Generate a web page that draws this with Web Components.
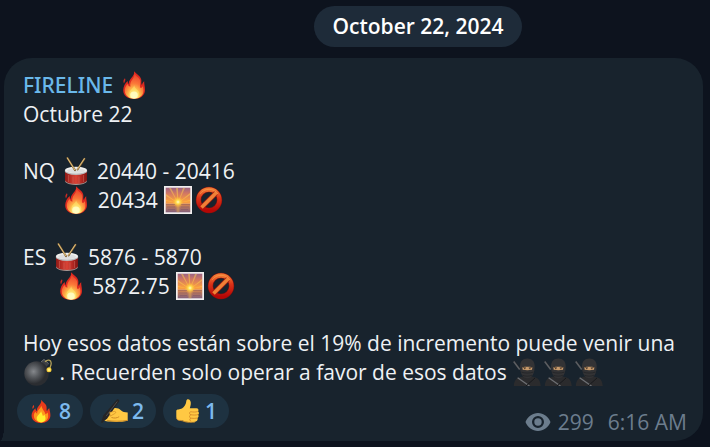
<!DOCTYPE html>
<html lang="es">
<head>
<meta charset="utf-8">
<meta name="viewport" content="width=device-width, initial-scale=1">
<title>FIRELINE</title>
<style>
html,body{margin:0;min-height:100%;background:#0d131e}
body{font-family:"Open Sans","Noto Sans",sans-serif;font-size:21px;line-height:29px;color:#eef1f4}
</style>
</head>
<body>
<chat-view>
  <date-badge>October 22, 2024</date-badge>
  <chat-message>
    <span slot="author">FIRELINE <chat-emoji name="fire"></chat-emoji></span>
    <message-part><message-line>Octubre 22</message-line></message-part>
    <message-part><message-line>NQ <chat-emoji name="drum"></chat-emoji> 20440 - 20416</message-line><message-line>       <chat-emoji name="fire"></chat-emoji> 20434 <chat-emoji name="sunrise"></chat-emoji><chat-emoji name="ban"></chat-emoji></message-line></message-part>
    <message-part><message-line>ES <chat-emoji name="drum"></chat-emoji> 5876 - 5870</message-line><message-line>      <chat-emoji name="fire"></chat-emoji> 5872.75 <chat-emoji name="sunrise"></chat-emoji><chat-emoji name="ban"></chat-emoji></message-line></message-part>
    <message-part><message-line>Hoy esos datos están sobre el 19% de incremento puede venir una <chat-emoji name="bomb"></chat-emoji> . Recuerden solo operar a favor de esos datos <chat-emoji name="ninja"></chat-emoji><chat-emoji name="ninja"></chat-emoji><chat-emoji name="ninja"></chat-emoji></message-line></message-part>
    <reaction-chip slot="reactions" icon="flame">8</reaction-chip>
    <reaction-chip slot="reactions" icon="writing">2</reaction-chip>
    <reaction-chip slot="reactions" icon="thumb">1</reaction-chip>
    <message-meta slot="meta" views="299">6:16 AM</message-meta>
  </chat-message>
</chat-view>
<script>
const ART = {
fire: ['fuego', `<defs><radialGradient id="a" cx=".5" cy=".92" r=".9"><stop offset="0" stop-color="#ffffd0"/><stop offset=".15" stop-color="#fff38a"/><stop offset=".35" stop-color="#fdbf4b"/><stop offset=".6" stop-color="#fb7638"/><stop offset="1" stop-color="#e8402c"/></radialGradient></defs>
<path d="M14 .3c.4 2.200-.3 3.700-1.500 5.300C10.500 8.200 8.800 9.700 8.600 13c-.7-.7-.9-1.800-.7-3-2.900 2.200-4.700 5.700-4.700 9.300C3.200 24.800 8 28 14 28s11-3.300 11-9c0-3.400-1-6-.8-8.700-1.300.9-2 2.200-2.200 3.800-.8-1-.8-2.600-.6-4.300C21.200 5.300 17.500 4 14 .3z" fill="#dd2a20"/>
<path d="M14.300 2.500c.3 2.500-.8 4.200-2 6-1.500 2.200-2.500 4-1.900 7.300-1.500-.5-2.500-1.600-2.900-2.800-2 2.100-2.900 4.600-2.700 7.100C5.100 24.800 9 27.800 14 27.800c5.200 0 9.300-3 9.500-7.700.1-1.800-.4-3.400-.5-4.900-1 .8-1.600 1.700-2.500 1.900-1.200-2 .1-4.300-.2-7.100-.3-3.100-4.100-4.300-6-7.500z" fill="url(#a)"/>
<path d="M14 14c.4 2.800-4.500 4.500-4.500 8.300 0 3.200 2 5.200 4.800 5.200 3.200 0 5-2 4.900-5-.1-3.600-4.400-4.500-5.200-8.500z" fill="#ffec75" opacity=".5"/><ellipse cx="14" cy="24" rx="3.800" ry="3.500" fill="#ffffcc" opacity=".8"/>
<path d="M4.900 7.300c1.200 1.200-.1 3.300-.9 5.100-1-1.500-.8-3.700.9-5.100z" fill="#c92c24"/>`],
drum: ['tambor', `<defs><linearGradient id="a"><stop stop-color="#8c1a17"/><stop offset=".25" stop-color="#b92d25"/><stop offset=".5" stop-color="#d84437"/><stop offset=".75" stop-color="#b32822"/><stop offset="1" stop-color="#7d1513"/></linearGradient></defs>
<path d="M3 14v9.300c0 2.500 4.800 4.300 11 4.300s11-1.800 11-4.300V14z" fill="url(#a)"/>
<path d="M3 23.600c1.500 2.500 5.500 3.400 11 3.400s9.500-.9 11-3.400v.2c0 2.400-4.800 4.100-11 4.100S3 26.200 3 23.800z" fill="#a39b98"/>
<path d="M6.500 18v7M11 19.500V26M17 19.500V26M21.500 18v7" stroke="#d77b70" stroke-width=".4"/>
<ellipse cx="14" cy="14" rx="11.300" ry="4" fill="#b9bbbd"/><ellipse cx="14" cy="13.200" rx="11" ry="3.400" fill="#f0f0ef"/><ellipse cx="14" cy="13.700" rx="9" ry="2.400" fill="#dedfdf"/>
<path d="M5.500 1 13 13.200M22.500 1.700 15.600 12.500" stroke="#7e5c2c" stroke-width="1.800" stroke-linecap="round"/><path d="M5.300 1 12.600 12.500M22.300 1.700 15.500 12" stroke="#dbbb7a" stroke-width="1.100" stroke-linecap="round"/>`],
sunrise: ['amanecer', `<defs><linearGradient id="a" x2="0" y2="1"><stop stop-color="#9b6385"/><stop offset=".35" stop-color="#d17763"/><stop offset=".8" stop-color="#f79c42"/></linearGradient><linearGradient id="b" x2="0" y2="1"><stop stop-color="#d9874c"/><stop offset="1" stop-color="#835f7b"/></linearGradient><radialGradient id="c"><stop stop-color="#fffbd0"/><stop offset=".35" stop-color="#ffe04c"/><stop offset="1" stop-color="#ffb62c" stop-opacity="0"/></radialGradient></defs>
<path d="M0 0h28v28H0z" fill="#f1eeee"/><path d="M1.700 1.700h24.600v16H1.700z" fill="url(#a)"/>
<path d="m14 17-12-9v2zm0 0L5 2h2zm0 0L12 2h2zm0 0 5-15h2zm0 0 12-10v2zm0 0L2 14v1zm0 0 12-3v1z" fill="#ffd04b" opacity=".5"/>
<path d="M1.700 17.500h24.600v8.800H1.700z" fill="url(#b)"/><circle cx="14" cy="16" r="5.500" fill="url(#c)"/>
<path d="M12.500 19h3v7.300h-3z" fill="#f7b84d" opacity=".4"/><path d="M2 18.500h9m6 0h9M3 21h8m6 0h8M4 23.500h7m6 0h7" stroke="#704c64" stroke-width=".6" opacity=".6"/>`],
ban: ['prohibido', `<defs><linearGradient id="a" x2="0" y2="1"><stop stop-color="#f07a35"/><stop offset=".4" stop-color="#db3418"/><stop offset="1" stop-color="#b50706"/></linearGradient></defs>
<circle cx="14" cy="14" r="10.500" fill="none" stroke="#86110c" stroke-width="5.400"/><circle cx="14" cy="14" r="10.500" fill="none" stroke="url(#a)" stroke-width="4.300"/><path d="M7 21 21 7" stroke="#a11c10" stroke-width="5"/><path d="M6.500 21.500 21.500 6.500" stroke="#f08036" stroke-width="3.600"/><path d="M5 8a11 11 0 0 1 18 0" fill="none" stroke="#ffa552" stroke-width="1" opacity=".5"/>`],
bomb: ['bomba', `<defs><radialGradient id="a" cx=".38" cy=".42"><stop stop-color="#85888c"/><stop offset=".5" stop-color="#55585c"/><stop offset="1" stop-color="#2b2d31"/></radialGradient></defs>
<path d="m15.800 5 4-4 5.300 4.800-3.600 4.200z" fill="#3c3f44"/><path d="m17 4 3-2.600 4.600 4.300" fill="none" stroke="#65686d"/><circle cx="12.500" cy="15.500" r="12.200" fill="url(#a)"/><path d="M21 3.900C23.500 1.100 27 1.700 27.200 5c.1 2.500-1.200 4.300-1.700 6" fill="none" stroke="#b2a05a" stroke-width="1.300"/><circle cx="25" cy="11.700" r="2.500" fill="#f5c831"/><circle cx="25" cy="11.700" r="1.500" fill="#fff07a"/>`],
ninja: ['ninja', `<path d="m.6 3.800 1-.8L17 22l-1 1z" fill="#202225"/><path d="m.7 3.600 6 8" stroke="#5c5e62" stroke-width="1.600"/>
<path d="M.8 28c.2-4.200 1.800-7.700 5.500-8.500l4-1.300h7.900l4.200 1.300c3.500.9 5.100 4.300 5.300 8.500z" fill="#2b2b2d"/>
<path d="M14.300.5C9.500.5 7 3.700 7 8.500c0 5.700 2.200 9.700 4.200 10.900 1.700 1 4.600 1 6.300 0 2-1.200 4.200-5.200 4.200-10.900 0-4.800-2.500-8-7.400-8z" fill="#333335"/>
<path d="M9.300 9.300c3.100-.6 7-.6 10.100 0l-.4 2.500c-3.100.5-6.200.5-9.300 0z" fill="#c79a6b"/><path d="m9.700 9.300 3.300.5m6-.5-3.300.5" stroke="#38291f" stroke-width=".6"/><circle cx="11.800" cy="10.600" r=".6" fill="#241c18"/><circle cx="16.900" cy="10.600" r=".6" fill="#241c18"/>
<path d="M8.300 14.100c3.500 1.300 8.600 1.300 12.100 0M9.500 17.200c3 1.300 6.500 1.300 9.500 0" fill="none" stroke="#202124" stroke-width=".7"/><path d="m4.600 19.800 11.900 8.200" stroke="#6e7074" stroke-width="1.300"/><path d="M22 20 13 28" stroke="#18191c"/>`],
flame: ['fuego', `<path d="M14.300 1c.4 3-1 4.700-3 7.200-1.500 1.800-2.300 3.500-2 5.900-1.300-.6-1.700-2-1.700-3.300C5 13 3 16 3 19.200 3 24.600 7.800 28 14 28s11-3.300 11-9c0-3.200-1.100-5.500-1.200-8.200-1.500.8-2.400 2-2.600 3.600-1.200-1.200-.4-3-.7-5C20 5.500 16.500 4.500 14.300 1z" fill="#e83b1b"/><path d="M14.200 7.500c0 3.500-4.900 5.200-4.700 9.700-1-.5-1.700-1.200-2-2.200-1.300 1.400-1.900 3-1.800 4.900.3 4.700 3.800 7.100 8.400 7.100s8.200-2.700 8.300-7c0-1.600-.3-2.900-.6-4.200-.8 1-1.500 1.600-2.500 1.900-1-3.600-3.900-5.700-5.100-10.200z" fill="#ff981c"/><path d="M14 14c0 3-5 4.700-5 8.500 0 3 2 4.800 5.100 4.800 3.200 0 5.200-1.700 5.200-4.700 0-2-.9-3.300-1.400-4.600-.4 1-1 1.500-1.700 1.800C15.500 17.500 14.800 16.300 14 14z" fill="#fff02f"/><path d="M5.500 7c1.300 1.500-.1 3-1 4.700C3.500 10 4 8.300 5.500 7z" fill="#e83b1b"/>`],
writing: ['escribiendo', `<path d="M2.500 24.500c0-3.500 2-6.500 4.500-9C9 13.200 11.500 11 14.500 10.500c3-.4 5.500.7 7.500 2.500 1.800 1.700 4.500 2.500 8 2.700v9.800c-4.500 1-9 1.300-13 1.300-4.500 0-9.500-.3-13.200-1-1-.2-1.300-.6-1.300-1.300z" fill="#ffc843"/><path d="M11 21.500c3.500 1.200 6.500.8 9-.9M6 25c7 1.200 16 1.200 24-.1" stroke="#c98423" stroke-width="1"/><path d="M17.200.8c1.300-1.500 3.700.3 2.700 2L6.300 22.500 0 28l-1-.8 2.500-8z" fill="#252426"/><path d="m17.800 3-13 17" stroke="#5d5b5a" stroke-width=".8"/><path d="m9 15.500 5.500-1c1.800-.2 2 2 .4 2.500L9.500 20z" fill="#ffc843" stroke="#c98423" stroke-width=".7"/>`],
thumb: ['pulgar arriba', `<path d="M1.500 14c0-1.200 1-1.800 2.500-1.800 3 0 5.500-1.500 7.500-4.500 1.200-2 1.500-3.500 1.700-5.300C13.400.8 14.300.2 15.400.3c2.400.3 3.400 3 3 5.800-.2 1.700-.7 3.200-1.100 4.600l7.700.2c2.200.1 3 2 2 3.600 1.300 1 1.200 2.900 0 3.900 1 1.300.6 3-.7 3.800.8 2.500-1 4.300-4 4.600-5.300.4-9.200.2-12.700-1.400-1-.5-2-.7-4-.7-3 0-4.100-1.200-4.100-4z" fill="#ffc843"/><path d="M26.500 14.600c-2.700.9-5.200.7-7.700.3-2.400-.3-2.400 3.300 0 3.500 2.700.4 5.500.5 8.100-.2M26.200 22.200c-2.500.6-5 .5-7.400.2-2.500-.4-2.400-3.400 0-4M18.500 22.300c-1.900.8-1.500 3.200.4 3.700" fill="none" stroke="#d48827" stroke-width="1"/><path d="M2 22.500c.4 1.800 1.800 2.400 4 2.400 2 0 3.300.9 5 1.400 4 1.100 8 1.100 12.300.5" fill="none" stroke="#e29b2c"/>`]
};
const define = (tag, html, setup) => {
  const template = document.createElement('template');
  template.innerHTML = html;
  customElements.define(tag, class extends HTMLElement {
    constructor() { super(); this.attachShadow({mode:'open'}).append(template.content.cloneNode(true)); }
    connectedCallback() { if (setup) setup(this, this.shadowRoot); }
  });
};
const paint = (svg, name) => {
  const [label, art] = ART[name];
  svg.setAttribute('aria-label', label);
  svg.innerHTML = art;
};
define('chat-emoji', `<style>:host{display:inline-block;width:28px;height:28px;margin:0 2px 0 1px;vertical-align:-6px;line-height:0}svg{display:block;width:100%;height:100%}</style><svg viewBox="0 0 28 28" fill="none" role="img"></svg>`,
 (el, root) => paint(root.querySelector('svg'), el.getAttribute('name')));
define('chat-view', `<style>:host{display:flex;flex-direction:column;gap:11px;padding:6px 7px 6px 4px}</style><slot></slot>`);
define('date-badge', `<style>:host{display:flex;justify-content:center;padding-left:129px}time{padding:6px 19px;border-radius:24px;background:#1e2b39;color:#fff;font-weight:600}</style><time datetime="2024-10-22"><slot></slot></time>`);
define('message-part', `<style>:host{display:block}:host(:not(:last-of-type)){margin-bottom:28px}</style><slot></slot>`);
define('message-line', `<style>:host{display:block;white-space:pre-wrap}</style><slot></slot>`);
define('chat-message', `<style>
:host{display:block}
article{position:relative;background:#18232d;border-radius:28px 28px 28px 0;padding:13px 13px 6px 19px}
article::before{content:"";position:absolute;left:-4px;bottom:0;width:4px;height:14px;background:radial-gradient(4px 14px at 0 0,transparent 96%,#18232d)}
header{color:#6ab8ea;font-family:"Noto Sans","Open Sans",sans-serif;font-weight:500}
footer{display:flex;justify-content:space-between;align-items:flex-start;gap:12px;margin:7px 0 0 -6px}
.reactions{display:flex;gap:7px}
</style><article><header><slot name="author"></slot></header><slot></slot><footer><div class="reactions"><slot name="reactions"></slot></div><slot name="meta"></slot></footer></article>`);
define('reaction-chip', `<style>:host{display:block}button{display:flex;align-items:center;gap:6px;height:34px;padding:0 12px;border:0;border-radius:17px;background:#1e3241;color:#7cb9ee;font:inherit;font-weight:600}svg{width:24px;height:24px;overflow:visible}</style><button type="button"><svg viewBox="0 0 28 28" fill="none" role="img"></svg><span><slot></slot></span></button>`,
 (el, root) => paint(root.querySelector('svg'), el.getAttribute('icon')));
define('message-meta', `<style>:host{display:flex;align-items:center;gap:7px;color:#6c7d8d;padding:15px 3px 0 0;line-height:26px}svg{width:26px;height:20px}time{margin-left:7px}</style><svg viewBox="0 0 26 20" role="img" aria-label="Vistas"><path fill="currentColor" fill-rule="evenodd" d="M13 1C7.500 1 2.700 4.500.5 10 2.700 15.500 7.500 19 13 19s10.300-3.500 12.500-9C23.300 4.500 18.500 1 13 1zm0 15a6 6 0 1 1 0-12 6 6 0 0 1 0 12zm0-9.700a3.700 3.700 0 1 0 0 7.400 3.700 3.700 0 0 0 0-7.400z"/></svg><span class="views"></span><time><slot></slot></time>`,
 (el, root) => { root.querySelector('.views').textContent = el.getAttribute('views'); });
</script>
</body>
</html>
